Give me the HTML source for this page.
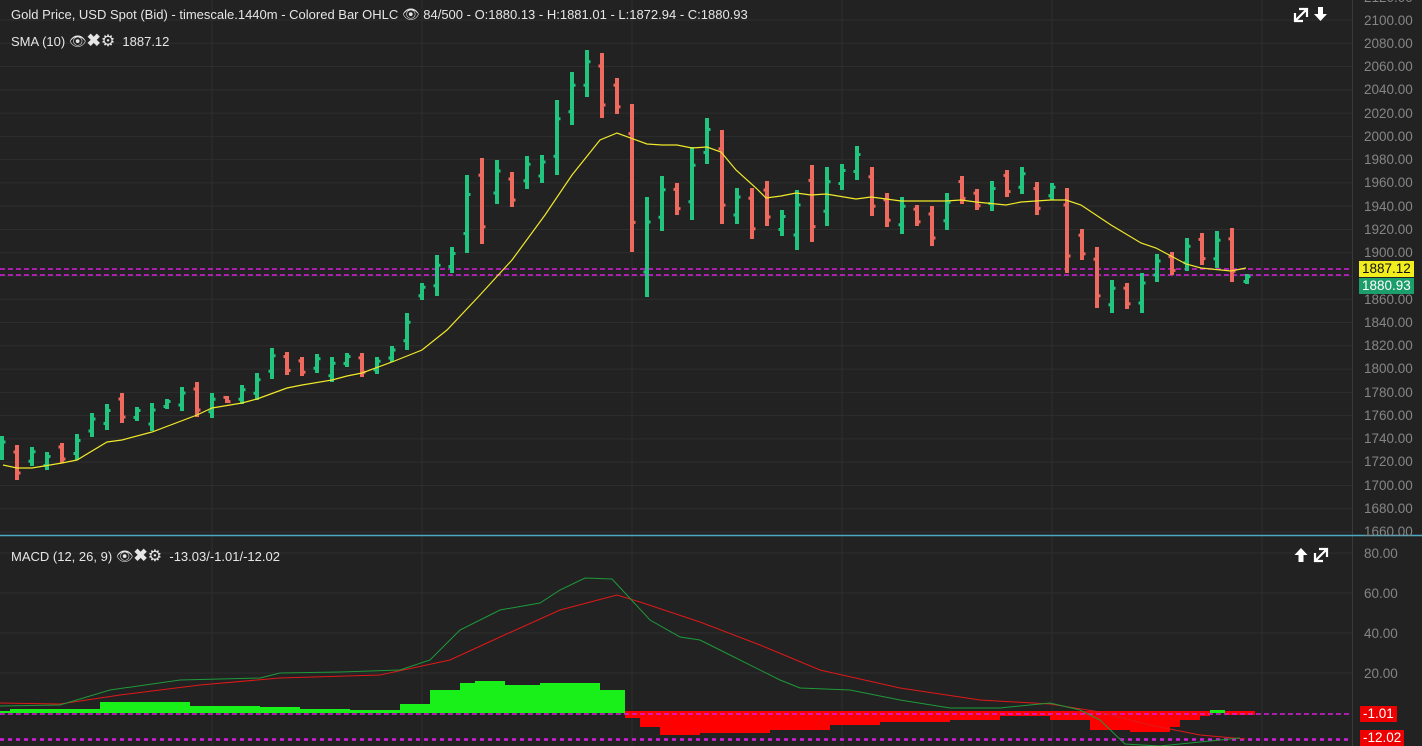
<!DOCTYPE html>
<html><head><meta charset="utf-8"><style>
html,body{margin:0;padding:0;background:#222222;overflow:hidden}
body{width:1422px;height:746px;position:relative;font-family:"Liberation Sans",Arial,sans-serif}
.t{position:absolute;color:#e6e6e6;font-size:13px;white-space:nowrap}
.ax{position:absolute;left:1364px;color:#858585;font-size:13.5px}
.lab{position:absolute;left:1359px;font-size:13.5px;padding:0 3px;height:16px;line-height:16px}
</style></head><body>
<svg id="s" width="1422" height="746" style="position:absolute;left:0;top:0">
<g id="grid" stroke="#2e2e2e" stroke-width="1"></g>
<line x1="1352.5" y1="0" x2="1352.5" y2="746" stroke="#3a3a3a"/>
<line x1="0" y1="269" x2="1352" y2="269" stroke="#d51ee0" stroke-width="1.6" stroke-dasharray="5,3"/>
<line x1="0" y1="275" x2="1352" y2="275" stroke="#d51ee0" stroke-width="1.6" stroke-dasharray="5,3"/>
<g id="bars"></g>
<polyline fill="none" stroke="#f0e82a" stroke-width="1.2" points="3,465 17,468 32,468 62,463 77,460 107,442 122,440 152,432 197,415 212,408 242,403 257,399 287,388 302,385 332,380 347,376 362,373 392,362 422,350 447,330 480,295 512,260 545,215 572,175 600,140 617,133 647,144 662,145 677,145 692,148 707,147 721,152 736,170 756,188 766,198 781,196 796,193 811,195 826,194 856,199 871,197 901,201 946,201 961,200 976,202 1006,205 1021,202 1051,200 1066,200 1081,205 1111,225 1141,243 1156,248 1171,256 1186,264 1201,268 1231,271 1246,268"/>
<line x1="0" y1="535.5" x2="1422" y2="535.5" stroke="#4aa8c0" stroke-width="1.5"/>
<g id="hist"></g>
<line x1="0" y1="714" x2="1352" y2="714" stroke="#d51ee0" stroke-width="1.6" stroke-dasharray="5,3"/>
<line x1="0" y1="739.5" x2="1352" y2="739.5" stroke="#d51ee0" stroke-width="2.5" stroke-dasharray="4,4"/>
<polyline fill="none" stroke="#e01818" stroke-width="1" points="0,703 60,704 120,695 200,685 280,678 380,675 450,660 500,637 560,610 617,595 640,602 700,622 760,645 820,670 900,688 980,700 1050,704 1100,712 1150,725 1200,735 1245,739"/>
<polyline fill="none" stroke="#1e9a3a" stroke-width="1" points="0,706 60,705 110,690 180,680 260,678 280,673 340,672 400,670 430,660 460,630 500,610 540,603 560,590 585,578 612,579 650,620 680,637 700,640 720,650 780,680 800,688 850,690 900,700 950,708 1000,708 1050,703 1080,710 1100,720 1125,744 1160,746 1200,742 1240,738"/>
<g fill="#fff" stroke="#fff">
<path d="M1295 21 L1307 9 M1299 9 h8 v8 M1295 13 v8 h8" stroke-width="2.2" fill="none"/>
<path d="M1318 7 h5 v7 h4 l-6.5 7 l-6.5 -7 h4z" stroke="none"/>
<path d="M1301 548 l6.5 7 h-4 v7 h-5 v-7 h-4z" stroke="none"/>
<path d="M1315 561 L1327 549 M1319 549 h8 v8 M1315 553 v8 h8" stroke-width="2.2" fill="none"/>
</g>
</svg>
<div class="t" style="left:11px;top:6px">Gold Price, USD Spot (Bid) - timescale.1440m - Colored Bar OHLC <span style="font-size:14px">👁︎</span> 84/500 - O:1880.13 - H:1881.01 - L:1872.94 - C:1880.93</div>
<div class="t" style="left:11px;top:31px">SMA (10) <span style="font-size:14px">👁︎</span><b style="font-size:17px">✖</b><span style="font-size:16px">⚙</span>&nbsp; 1887.12</div>
<div class="t" style="left:11px;top:546px">MACD (12, 26, 9) <span style="font-size:14px">👁︎</span><b style="font-size:17px">✖</b><span style="font-size:16px">⚙</span>&nbsp; -13.03/-1.01/-12.02</div>
<div class="lab" style="top:261px;background:#f2ee1e;color:#111">1887.12</div>
<div class="lab" style="top:278px;background:#1c9e6a;color:#fff">1880.93</div>
<div class="lab" style="top:706px;background:#ee0000;color:#fff;left:1360px">-1.01</div>
<div class="lab" style="top:730px;background:#ee0000;color:#fff;left:1360px">-12.02</div>
<script>
var NS="http://www.w3.org/2000/svg";
function el(p,t,a){var e=document.createElementNS(NS,t);for(var k in a)e.setAttribute(k,a[k]);p.appendChild(e);return e;}
var g=document.getElementById('grid');
for(var p=2120;p>=1660;p-=20){var y=20+(2100-p)*1.1636;el(g,'line',{x1:0,x2:1352,y1:y,y2:y});}
[553,593,633,673].forEach(function(y){el(g,'line',{x1:0,x2:1352,y1:y,y2:y});});
[212,422,632,842,1052,1262].forEach(function(x){el(g,'line',{x1:x,x2:x,y1:0,y2:746});});
var B=[[436,460,1],[445,480,0],[447,466,1],[452,470,1],[443,463,0],[434,460,1],[413,437,1],[404,430,1],[393,423,0],[407,421,1],[403,431,1],[399,409,1],[387,411,1],[382,417,0],[393,418,1],[396,403,0],[385,404,1],[373,400,1],[348,379,1],[352,375,0],[357,376,0],[354,373,1],[357,382,1],[353,367,1],[353,377,0],[357,374,1],[346,362,1],[313,350,1],
[283,300,1],[255,296,1],[247,273,1],[175,253,1],[158,244,0],[160,204,1],[172,207,0],[156,189,1],[155,183,1],[100,175,1],[72,125,1],[50,97,1],[53,118,0],[78,114,0],[104,252,0],[197,297,1],[176,231,1],[183,215,0],[147,220,1],[118,164,1],[130,224,0],[188,224,1],[188,239,0],[181,226,0],[210,236,1],[190,250,1],[165,242,0],
[167,226,1],[164,190,1],[146,180,1],[167,216,0],[193,227,0],[197,234,1],[205,226,0],[206,246,0],[193,230,1],[176,204,0],[189,210,0],[181,211,1],[170,197,0],[167,194,1],[182,215,0],[183,200,1],[188,273,0],[229,260,0],[247,308,0],[280,313,1],[283,309,0],[273,313,1],[254,282,1],[252,275,0],[238,271,1],[233,265,0],[231,268,1],[228,282,0],[274,284,1]];
var bg=document.getElementById('bars');
B.forEach(function(b,i){var x=2+15*i,c=b[2]?'#22c57e':'#ee6a5e',h=b[1]-b[0];
var o=b[2]?b[0]+h*0.75:b[0]+h*0.2,cl=b[2]?b[0]+h*0.25:b[0]+h*0.8;
el(bg,'rect',{x:x-2,y:b[0],width:4,height:h,fill:c});
el(bg,'rect',{x:x-3.5,y:o-1.5,width:2,height:3,fill:c});
el(bg,'rect',{x:x+1.5,y:cl-1.5,width:2,height:3,fill:c});});
var hg=document.getElementById('hist');
var G=[[0,10,711],[10,100,709],[100,190,702],[190,260,706],[260,300,707],[300,350,709],[350,400,710],[400,430,704],[430,460,690],[460,475,683],[475,505,681],[505,540,685],[540,600,683],[600,625,690]];
G.forEach(function(a){el(hg,'rect',{x:a[0],y:a[2],width:a[1]-a[0],height:713-a[2],fill:'#19f019'});});
var R=[[625,640,718],[640,660,727],[660,700,735],[700,770,733],[770,830,730],[830,880,725],[880,950,722],[950,1000,720],[1000,1050,716],[1050,1090,720],[1090,1130,730],[1130,1170,732],[1170,1180,727],[1180,1200,720],[1200,1210,716],[1225,1255,715]];
R.forEach(function(a){el(hg,'rect',{x:a[0],y:711,width:a[1]-a[0],height:a[2]-711,fill:'#ff0000'});});
el(hg,'rect',{x:1210,y:710,width:15,height:3,fill:'#19f019'});
</script>
<div class="ax" style="top:-10px">2120.00</div>
<div class="ax" style="top:13px">2100.00</div>
<div class="ax" style="top:36px">2080.00</div>
<div class="ax" style="top:59px">2060.00</div>
<div class="ax" style="top:82px">2040.00</div>
<div class="ax" style="top:106px">2020.00</div>
<div class="ax" style="top:129px">2000.00</div>
<div class="ax" style="top:152px">1980.00</div>
<div class="ax" style="top:175px">1960.00</div>
<div class="ax" style="top:199px">1940.00</div>
<div class="ax" style="top:222px">1920.00</div>
<div class="ax" style="top:245px">1900.00</div>
<div class="ax" style="top:292px">1860.00</div>
<div class="ax" style="top:315px">1840.00</div>
<div class="ax" style="top:338px">1820.00</div>
<div class="ax" style="top:361px">1800.00</div>
<div class="ax" style="top:385px">1780.00</div>
<div class="ax" style="top:408px">1760.00</div>
<div class="ax" style="top:431px">1740.00</div>
<div class="ax" style="top:454px">1720.00</div>
<div class="ax" style="top:478px">1700.00</div>
<div class="ax" style="top:501px">1680.00</div>
<div class="ax" style="top:524px">1660.00</div>
<div class="ax" style="top:546px">80.00</div>
<div class="ax" style="top:586px">60.00</div>
<div class="ax" style="top:626px">40.00</div>
<div class="ax" style="top:666px">20.00</div>
</body></html>
